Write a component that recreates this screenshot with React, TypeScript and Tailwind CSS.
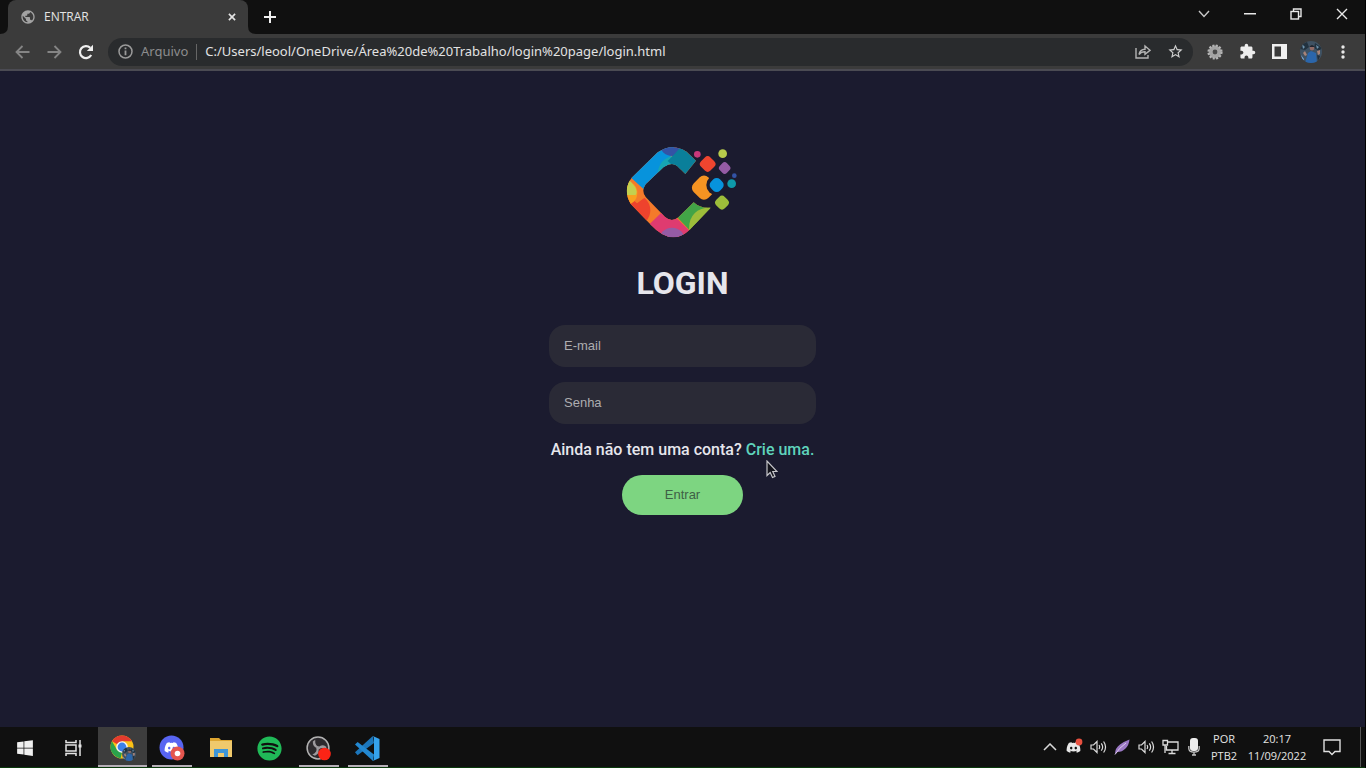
import React from "react";
import { FaDiscord, FaSpotify, FaWindows } from "react-icons/fa";
import { MdExtension, MdPublic, MdStarBorder } from "react-icons/md";

const tabButton = "flex h-7 w-[46px] items-center justify-center";
const toolButton = "flex h-8 w-8 shrink-0 items-center justify-center";

function Logo() {
  return (
    <svg width="136" height="112" viewBox="0 0 408 336" role="img" aria-label="Logo">
      <defs>
        <clipPath id="ring">
          <path d="M243 77L215 50Q171 22 128 52L50 128Q22 165 48 208L108 270Q170 336 224 284L287 218Q256 221 236 202L190 247Q170 263 150 246L92 186Q78 168 92 148L146 96Q170 80 186 92L211 117Z" />
        </clipPath>
      </defs>
      <g clipPath="url(#ring)">
        <rect width="408" height="336" fill="#f47a2a" />
        <path d="M30 115L50 130L92 168L150 110L180 30L100 30Z" fill="#0793dc" />
        <path d="M128 112Q135 70 173 63L215 95L160 120Z" fill="#16a6b4" />
        <circle cx="172" cy="24" r="39" fill="#3353a5" />
        <path d="M173 63L212 20L260 80L211 125L158 78Z" fill="#0a7f9a" />
        <circle cx="58" cy="226" r="48" fill="#ee432d" />
        <path d="M48 132L92 186L66 205L44 185Z" fill="#f47a2a" />
        <circle cx="30" cy="174" r="37" fill="#f8a11f" />
        <path d="M42 135Q73 164 62 180L20 180L20 120Z" fill="#c3d04f" />
        <path d="M104 267L138 234L180 245L222 286L190 330L130 325Z" fill="#df3b70" />
        <circle cx="171" cy="318" r="40" fill="#955ba5" />
        <path d="M188 248L236 198L292 218L224 286Z" fill="#42a447" />
        <path d="M222 282Q222 220 290 216L290 250L225 290Z" fill="#9dbd3a" />
      </g>
      <circle cx="247" cy="58" r="10" fill="#c9387a" />
      <circle cx="323" cy="56" r="13" fill="#b7cb4b" />
      <rect x="258" y="67" width="40" height="40" rx="12" transform="rotate(45 278 87)" fill="#ee452f" />
      <rect x="314" y="84" width="30" height="30" rx="10" transform="rotate(45 329 99)" fill="#955ba5" />
      <circle cx="358" cy="122" r="7" fill="#3353a5" />
      <circle cx="350" cy="146" r="13" fill="#0e9aaa" />
      <rect x="236" y="127" width="62" height="62" rx="18" transform="rotate(45 267 158)" fill="#f59322" />
      <circle cx="305" cy="150" r="31" fill="#1b1b2f" />
      <rect x="286" y="131" width="38" height="38" rx="14" transform="rotate(45 305 150)" fill="#0793dc" />
      <rect x="303" y="185" width="36" height="36" rx="12" transform="rotate(45 321 203)" fill="#9dbd3a" />
    </svg>
  );
}

function Avatar({ size }: { size: number }) {
  return (
    <svg width={size} height={size} viewBox="0 0 22 22">
      <clipPath id={`avatar${size}`}><circle cx="11" cy="11" r="11" /></clipPath>
      <g clipPath={`url(#avatar${size})`}>
        <rect width="22" height="22" fill="#3f5263" />
        <path d="M0 4L7 1L9 6L5 9L0 8ZM15 2L22 7L19 10L14 7Z" fill="#22323f" />
        <path d="M2 3L5 6L3 8ZM16 4L19 6L17 8Z" fill="#6f93ad" />
        <path d="M5 22L8 12L11 10L16 12L17 22Z" fill="#2b66ab" />
        <circle cx="12" cy="7" r="2.4" fill="#8f6a66" />
        <path d="M9.4 6Q12 2 14.6 6Z" fill="#1d2430" />
        <path d="M17 10L20 9L20 13L18 14ZM3 12L5 10L7 14L5 15Z" fill="#a98478" />
        <path d="M1 14L4 18L3 21Z" fill="#7aa8d8" />
        <path d="M17 14L20 15L18 20Z" fill="#232f3c" />
      </g>
    </svg>
  );
}

function TabStrip() {
  return (
    <header className="flex h-[34px] shrink-0 items-start bg-[#101010]">
      <div className="flex h-[34px] w-64 shrink-0 items-end">
        <svg width="8" height="8" viewBox="0 0 8 8"><path d="M8 0V8H0Q8 8 8 0Z" fill="#3b3b3b" /></svg>
        <div className="flex h-full flex-1 items-center rounded-t-lg bg-[#3b3b3b] pr-2 pl-3 text-[#e4e4e4]">
          <MdPublic size={16} className="text-[#a3a3a3]" />
          <span className="ml-2 flex-1 text-xs">ENTRAR</span>
          <button aria-label="Fechar guia" className="flex h-4 w-4 items-center justify-center">
            <svg width="8" height="8" viewBox="0 0 9 9" stroke="#e4e4e4" strokeWidth="1.8"><path d="M1 1L8 8M8 1L1 8" /></svg>
          </button>
        </div>
        <svg width="8" height="8" viewBox="0 0 8 8"><path d="M0 0V8H8Q0 8 0 0Z" fill="#3b3b3b" /></svg>
      </div>
      <button aria-label="Nova guia" className="flex h-[34px] w-7 items-center justify-center">
        <svg width="12" height="12" viewBox="0 0 12 12" stroke="#f0f0f0" strokeWidth="2"><path d="M6 0V12M0 6H12" /></svg>
      </button>
      <div className="ml-auto flex">
        <button aria-label="Pesquisar guias" className={tabButton}>
          <svg width="12" height="8" viewBox="0 0 12 8" fill="none" stroke="#c8c8c8" strokeWidth="1.4"><path d="M1 1L6 6.5L11 1" /></svg>
        </button>
        <button aria-label="Minimizar" className={tabButton}>
          <svg width="12" height="2" viewBox="0 0 12 2"><rect width="12" height="1.5" fill="#e8e8e8" /></svg>
        </button>
        <button aria-label="Restaurar" className={tabButton}>
          <svg width="12" height="12" viewBox="0 0 12 12" fill="none" stroke="#e8e8e8" strokeWidth="1.4"><rect x="1" y="3.5" width="7.5" height="7.5" /><path d="M3.5 3.5V1H11V8.5H8.5" /></svg>
        </button>
        <button aria-label="Fechar" className={tabButton}>
          <svg width="12" height="12" viewBox="0 0 12 12" stroke="#e8e8e8" strokeWidth="1.4"><path d="M1 1L11 11M11 1L1 11" /></svg>
        </button>
      </div>
    </header>
  );
}

function Toolbar() {
  return (
    <nav className="flex h-[37px] shrink-0 items-center border-b-2 border-[#4b4b53] bg-[#3b3b3b] px-1.5">
      <button aria-label="Voltar" className={toolButton}>
        <svg width="15" height="14" viewBox="0 0 15 14" fill="none" stroke="#858585" strokeWidth="1.8"><path d="M14.5 7H1.5M7.5 1L1.5 7L7.5 13" /></svg>
      </button>
      <button aria-label="Avançar" className={toolButton}>
        <svg width="15" height="14" viewBox="0 0 15 14" fill="none" stroke="#858585" strokeWidth="1.8"><path d="M.5 7H13.5M7.5 1L13.5 7L7.5 13" /></svg>
      </button>
      <button aria-label="Recarregar" className={toolButton}>
        <svg width="16" height="16" viewBox="0 0 16 16" fill="none"><path d="M13.2 11A6 6 0 1 1 12.2 3.8" stroke="#f0f0f0" strokeWidth="2.2" /><path d="M15 .8V7H8.8Z" fill="#f0f0f0" /></svg>
      </button>
      <div className="mx-1.5 flex h-7 flex-1 items-center rounded-full bg-[#292b2d] pr-0.5 pl-2.5 font-['Noto_Sans',sans-serif] text-[13px]">
        <svg width="15" height="15" viewBox="0 0 15 15" fill="none" stroke="#9a9a9a" strokeWidth="1.5"><circle cx="7.5" cy="7.5" r="6.5" /><path d="M7.5 6.5V11.2M7.5 3.6V5.2" strokeWidth="1.8" /></svg>
        <label htmlFor="address" className="ml-2 text-[#8d8d8d]">Arquivo</label>
        <span className="mx-2 h-4 w-px bg-[#666]" />
        <input
          id="address"
          className="min-w-0 flex-1 bg-transparent text-[#e2e2e2] outline-none"
          defaultValue="C:/Users/leool/OneDrive/Área%20de%20Trabalho/login%20page/login.html"
        />
        <button aria-label="Compartilhar" className={toolButton}>
          <svg width="16" height="15" viewBox="0 0 16 15" fill="none" stroke="#b4b4b4" strokeWidth="1.4"><path d="M1 4V14H13V11M4 10.5Q5 5.5 10 5.3V2L15 6.3L10 10.3V7.8Q6 7.8 4 10.5Z" /></svg>
        </button>
        <button aria-label="Favoritar" className={toolButton}>
          <MdStarBorder size={17} className="text-[#cfcfcf]" />
        </button>
      </div>
      <button aria-label="Extensão" className={toolButton}>
        <svg width="16" height="16" viewBox="0 0 16 16"><circle cx="8" cy="8" r="6.4" fill="#9b9b9b" stroke="#b5b5b5" strokeWidth="2.4" strokeDasharray="2 1.35" /><circle cx="8" cy="8" r="5.6" fill="#a4a4a4" /><circle cx="8" cy="8" r="2.4" fill="#4a4a4a" /></svg>
      </button>
      <button aria-label="Extensões" className={toolButton}><MdExtension size={17} className="text-[#ededed]" /></button>
      <button aria-label="Painel lateral" className={toolButton}>
        <svg width="15" height="15" viewBox="0 0 15 15"><path fillRule="evenodd" d="M0 0H15V15H0ZM2.5 2.5V12.5H9V2.5Z" fill="#f0f0f0" /></svg>
      </button>
      <button aria-label="Perfil" className={toolButton}><Avatar size={22} /></button>
      <button aria-label="Menu" className={toolButton}>
        <svg width="4" height="14" viewBox="0 0 4 14" fill="#e8e8e8"><circle cx="2" cy="2" r="1.7" /><circle cx="2" cy="7" r="1.7" /><circle cx="2" cy="12" r="1.7" /></svg>
      </button>
    </nav>
  );
}

const field =
  "h-[42px] w-full rounded-2xl bg-[#2a2a36] px-[15px] pb-0.5 text-[13px] text-[#c9c9c9] outline-none placeholder:text-[#adadb0] font-['Liberation_Sans',Arial,sans-serif]";

function LoginPage() {
  return (
    <main className="flex flex-1 flex-col items-center bg-[#1b1b2f] pt-16 font-[Roboto,sans-serif] text-[#e6e6ec]">
      <Logo />
      <h1 className="mt-4 text-[32px] leading-10 font-bold">LOGIN</h1>
      <form className="mt-[22px] flex w-[267px] flex-col items-center" onSubmit={(e) => e.preventDefault()}>
        <input type="email" aria-label="E-mail" placeholder="E-mail" className={field} />
        <input type="password" aria-label="Senha" placeholder="Senha" className={`${field} mt-[15px]`} />
        <p className="mt-[14px] text-base leading-6 font-medium whitespace-nowrap">
          Ainda não tem uma conta?{" "}
          <a href="#criar" className="relative text-[#5fd3bc]">
            Crie uma.
            <svg className="absolute top-5 left-5" width="12" height="19" viewBox="0 0 12 19"><path d="M1 1V15.5L4.2 12.5L6.5 17.5L9 16.4L6.8 11.5H11Z" fill="#14141c" stroke="#c6c6ca" strokeWidth="1.2" /></svg>
          </a>
        </p>
        <button className="mt-[13px] h-10 w-[121px] rounded-full bg-[#7dd581] font-['Liberation_Sans',Arial,sans-serif] text-[13px] text-[#3f6046]">
          Entrar
        </button>
      </form>
    </main>
  );
}

function TaskItem({ label, open, active, children }: { label: string; open?: boolean; active?: boolean; children: React.ReactNode }) {
  return (
    <button aria-label={label} className={`flex h-full w-[49px] flex-col items-center ${active ? "bg-[#3d3d3d]" : ""}`}>
      <span className="flex flex-1 items-center pt-1">{children}</span>
      <span className={`h-0.5 ${active ? "w-full" : "w-10"} ${open ? "bg-[#b7afb8]" : ""}`} />
    </button>
  );
}

function Volume() {
  return (
    <svg width="17" height="14" viewBox="0 0 17 14" fill="none" stroke="#dcdcdc" strokeWidth="1.2"><path d="M1 5H3.5L7 1.5V12.5L3.5 9H1ZM9 5Q10.3 7 9 9M11.3 3.3Q14 7 11.3 10.7M13.6 1.5Q17.5 7 13.6 12.5" /></svg>
  );
}

function Taskbar() {
  const tray = "flex w-6 items-center justify-center";
  return (
    <footer className="flex h-[41px] shrink-0 items-stretch border-b border-[#0a3a0c] bg-[#101010] text-[#e4e4e4]">
      <TaskItem label="Iniciar"><FaWindows size={18} className="text-[#f0f0f0]" /></TaskItem>
      <TaskItem label="Visão de tarefas">
        <svg width="17" height="16" viewBox="0 0 17 16" fill="none" stroke="#e4e4e4" strokeWidth="1.5"><path d="M1 0V2.5H11V0M1 16V13.5H11V16M15 0V16" /><rect x="1" y="5" width="10" height="6" /><rect x="13.5" y="4.5" width="3" height="3" fill="#e4e4e4" stroke="none" /></svg>
      </TaskItem>
      <TaskItem label="Chrome" open active>
        <svg width="26" height="26" viewBox="0 0 26 26">
          <circle cx="12" cy="12" r="11.5" fill="#fbc116" />
          <path d="M12 12L2 6.3A11.5 11.5 0 0 1 22 6.3H12Z" fill="#e33b2e" />
          <path d="M2 6.3L7 15L12 17.5L10.5 23.4A11.5 11.5 0 0 1 2 6.3Z" fill="#2aa24c" />
          <circle cx="12" cy="12" r="5.8" fill="#f5f5f5" />
          <circle cx="12" cy="12" r="4.4" fill="#3c80e8" />
          <g transform="translate(12 12)"><Avatar size={14} /></g>
        </svg>
      </TaskItem>
      <TaskItem label="Discord" open>
        <svg width="26" height="26" viewBox="0 0 26 26">
          <circle cx="12.5" cy="12.5" r="12" fill="#5865f2" />
          <g transform="translate(5 5)" color="#fff"><FaDiscord size={15} /></g>
          <circle cx="18.5" cy="18.5" r="7" fill="#e5564f" /><circle cx="18.5" cy="18.5" r="2.8" fill="#fff" />
        </svg>
      </TaskItem>
      <TaskItem label="Explorador de arquivos">
        <svg width="22" height="20" viewBox="0 0 22 20"><path d="M0 0H9L11 2H22V19H0Z" fill="#dda530" /><path d="M0 3H22V19H0Z" fill="#f0c96c" /><path d="M4 19V11H18V19H14V15H8V19Z" fill="#3e96d8" /></svg>
      </TaskItem>
      <TaskItem label="Spotify"><FaSpotify size={25} className="text-[#20ba58]" /></TaskItem>
      <TaskItem label="OBS Studio" open>
        <svg width="25" height="25" viewBox="0 0 25 25">
          <circle cx="12" cy="12" r="10.9" fill="#2c2a2e" stroke="#b2b2b2" strokeWidth="1.5" />
          <g fill="#9c9a9e">
            <path d="M6.8 5.5Q6.5 11.5 12 12.2Q13.6 12 13.2 10.6Q8.8 10 9.2 3.8Z" />
            <path d="M6.8 5.5Q6.5 11.5 12 12.2Q13.6 12 13.2 10.6Q8.8 10 9.2 3.8Z" transform="rotate(120 12 12)" />
            <path d="M6.8 5.5Q6.5 11.5 12 12.2Q13.6 12 13.2 10.6Q8.8 10 9.2 3.8Z" transform="rotate(240 12 12)" />
          </g>
          <circle cx="18.5" cy="18" r="6.3" fill="#fb2416" />
        </svg>
      </TaskItem>
      <TaskItem label="Visual Studio Code" open>
        <svg width="25" height="25" viewBox="0 0 25 25"><path d="M0 16.2L17.8 0L19 7L2.6 19.2Z" fill="#1c76bb" /><path d="M0 8.6L2.6 6L19 18.5L18 25Z" fill="#2388d1" /><path d="M17.8 0L24.5 3V22L17.8 25Q19 24 19 22V3Q19 1 17.8 0Z" fill="#35a2ed" /></svg>
      </TaskItem>
      <div className="ml-auto flex items-stretch">
        <button aria-label="Ícones ocultos" className={tray}><svg width="14" height="8" viewBox="0 0 14 8" fill="none" stroke="#d8d8d8" strokeWidth="1.5"><path d="M1 7L7 1L13 7" /></svg></button>
        <button aria-label="Discord" className={tray}>
          <svg width="17" height="18" viewBox="0 0 17 18"><g transform="translate(0 2)" color="#e8e8e8"><FaDiscord size={15} /></g><circle cx="13" cy="4" r="3.4" fill="#e8503f" /></svg>
        </button>
        <button aria-label="Volume" className={tray}><Volume /></button>
        <button aria-label="Pena" className={tray}>
          <svg width="16" height="16" viewBox="0 0 16 16"><path d="M1 15Q1 9 6 5.5Q10 2.5 15.5 .5Q15 6 11.5 9.5Q8 13 3.5 13Z" fill="#9a78c4" /><path d="M1 15.5Q5 9 12 4" fill="none" stroke="#dccbea" strokeWidth="1" /></svg>
        </button>
        <button aria-label="Som" className={tray}><Volume /></button>
        <button aria-label="Rede" className={tray}>
          <svg width="17" height="16" viewBox="0 0 17 16" fill="none" stroke="#dcdcdc" strokeWidth="1.3"><path d="M6 3H16V11H4.5V7M10 11V14.5M6.5 14.5H13.5M1 1.5H5.5V6H1ZM3 6V14" /></svg>
        </button>
        <button aria-label="Microfone" className={tray}>
          <svg width="12" height="18" viewBox="0 0 12 18"><rect x="2" y="0" width="8" height="13" rx="3" fill="#ededed" /><path d="M.8 8V10.5Q.8 14 6 14.2Q11.2 14 11.2 10.5V8M6 14V17M4 17H8" fill="none" stroke="#c4c4c4" strokeWidth="1.3" /></svg>
        </button>
        <button className="w-9 text-[11px] leading-[17px]">POR<br />PTB2</button>
        <button className="w-[70px] text-[11px] leading-[17px]"><time>20:17<br />11/09/2022</time></button>
        <button aria-label="Notificações" className="flex w-10 items-center justify-center">
          <svg width="18" height="17" viewBox="0 0 18 17" fill="none" stroke="#e0e0e0" strokeWidth="1.4"><path d="M1 1H17V12.5H12L9 15.5L6 12.5H1Z" /></svg>
        </button>
        <span className="mr-1 ml-2 w-px bg-[#555]" />
      </div>
    </footer>
  );
}

export default function App() {
  return (
    <div className="flex min-h-screen flex-col bg-black pr-px font-['Open_Sans','Noto_Sans',sans-serif]">
      <TabStrip />
      <Toolbar />
      <LoginPage />
      <Taskbar />
    </div>
  );
}
